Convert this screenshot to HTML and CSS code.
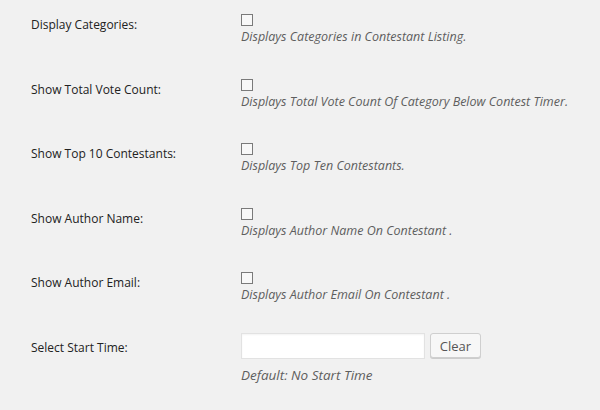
FILE: index.html
```html
<!DOCTYPE html>
<html lang="en">
<head>
  <meta charset="UTF-8" />
  <title>Contest Settings</title>
  <link rel="stylesheet" href="styles.css">
</head>
<body>

<div class="settings">
  <div class="row">
    <label class="label" for="cat">Display Categories:</label>
    <div class="field">
      <input type="checkbox" id="cat">
      <p class="desc">Displays Categories in Contestant Listing.</p>
    </div>
  </div>

  <div class="row">
    <label class="label" for="votes">Show Total Vote Count:</label>
    <div class="field">
      <input type="checkbox" id="votes">
      <p class="desc">Displays Total Vote Count Of Category Below Contest Timer.</p>
    </div>
  </div>

  <div class="row">
    <label class="label" for="top">Show Top 10 Contestants:</label>
    <div class="field">
      <input type="checkbox" id="top">
      <p class="desc">Displays Top Ten Contestants.</p>
    </div>
  </div>

  <div class="row">
    <label class="label" for="aname">Show Author Name:</label>
    <div class="field">
      <input type="checkbox" id="aname">
      <p class="desc">Displays Author Name On Contestant .</p>
    </div>
  </div>

  <div class="row">
    <label class="label" for="aemail">Show Author Email:</label>
    <div class="field">
      <input type="checkbox" id="aemail">
      <p class="desc">Displays Author Email On Contestant .</p>
    </div>
  </div>

  <div class="row">
    <label class="label" for="start">Select Start Time:</label>
    <div class="field time">
      <div class="time-input">
        <input type="text" id="start">
        <button class="clear">Clear</button>
      </div>
      <p class="desc default">Default: No Start Time</p>
    </div>
  </div>
</div>

</body>
</html>
```

FILE: styles.css
```css
* { margin: 0; padding: 0; box-sizing: border-box; }

body {
  font-family: 'Open Sans', sans-serif;
  background: #f1f1f1;
  color: #222;
  width: 600px;
  height: 410px;
  overflow: hidden;
}

.settings {
  padding-left: 31px;
}

.row {
  display: flex;
  height: 64.5px;
}

.label {
  width: 210px;
  padding-top: 16px;
  font-size: 12px;
  line-height: 18px;
  color: #222;
}

.field {
  padding-top: 14px;
}

.field input[type="checkbox"] {
  appearance: none;
  display: block;
  width: 12px;
  height: 12px;
  border: 1px solid #7a7a7a;
  background: #f8f8f8;
  margin-bottom: 2px;
}

.desc {
  font-size: 12.5px;
  line-height: 18px;
  font-style: italic;
  color: #5e5e5e;
}

.desc.default {
  font-size: 13.5px;
}

.time {
  padding-top: 10.5px;
}

.time-input {
  display: flex;
  gap: 5px;
  margin-bottom: 7px;
}

.time-input input {
  width: 184px;
  height: 26px;
  border: 1px solid #e2e2e2;
  background: #fff;
  box-shadow: inset 0 1px 2px rgba(0,0,0,0.05);
}

.clear {
  width: 51px;
  height: 25px;
  font-family: 'Open Sans', sans-serif;
  font-size: 13px;
  color: #555;
  background: #f7f7f7;
  border: 1px solid #cfcfcf;
  border-radius: 3px;
  box-shadow: 0 1px 0 #ccc;
}
```
